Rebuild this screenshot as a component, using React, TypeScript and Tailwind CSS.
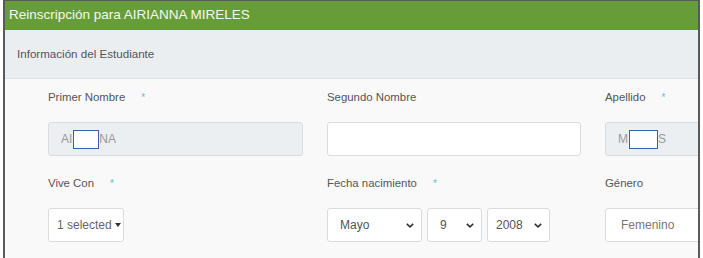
import React from "react";

const font = { fontFamily: '"Liberation Sans", Arial, sans-serif' };

function Label({ text, req }: { text: string; req?: boolean }) {
  return (
    <div className="h-[17px] flex items-center text-[11.4px] text-[#555]">
      <span>{text}</span>
      {req && <span className="ml-[16px] text-[#5bc0de] text-[10px] leading-none">*</span>}
    </div>
  );
}

function Chevron() {
  return (
    <svg width="10" height="7" viewBox="0 0 10 7" className="shrink-0">
      <path d="M1.8 1.8 L5 4.8 L8.2 1.8" fill="none" stroke="#333" strokeWidth="1.6" />
    </svg>
  );
}

function Redact({ className }: { className: string }) {
  return <span className={"inline-block h-[19px] bg-white border border-[#3a5fb0] " + className} />;
}

export default function App() {
  return (
    <div className="w-[703px] h-[258px] bg-white overflow-hidden" style={font}>
      <div className="ml-[3px] w-[697px] h-[258px] border-l-2 border-r-2 border-t border-[#5a5a5a] bg-[#f9f9f9] overflow-hidden flex flex-col">
        <div className="h-[29px] shrink-0 bg-[#679d38] flex items-center pl-[4px] text-[13.5px] text-[#f4f8ee]">
          Reinscripción para AIRIANNA MIRELES
        </div>
        <div className="h-[49px] shrink-0 bg-[#ebeef0] border-b border-[#dfe3e6] flex items-center pl-[12px] text-[11.6px] text-[#555]">
          Información del Estudiante
        </div>
        <div className="pl-[43px] pt-[10px] flex flex-col">
          <div className="flex gap-x-[24px] w-[700px]">
            <div className="w-[255px] shrink-0">
              <Label text="Primer Nombre" req />
              <div className="mt-[16px] h-[34px] rounded-[3px] border border-[#d8dcdf] bg-[#eceff1] flex items-center pl-[12px] text-[12px] text-[#9a9a9a]">
                <span>AI</span>
                <Redact className="w-[26px] ml-[1px]" />
                <span>NA</span>
              </div>
            </div>
            <div className="w-[254px] shrink-0">
              <Label text="Segundo Nombre" />
              <div className="mt-[16px] h-[34px] rounded-[3px] border border-[#d8dcdf] bg-white" />
            </div>
            <div className="w-[255px] shrink-0">
              <Label text="Apellido" req />
              <div className="mt-[16px] h-[34px] rounded-[3px] border border-[#d8dcdf] bg-[#eceff1] flex items-center pl-[12px] text-[12px] text-[#9a9a9a]">
                <span>M</span>
                <Redact className="w-[29px] ml-[1px]" />
                <span>S</span>
              </div>
            </div>
          </div>
          <div className="flex gap-x-[24px] w-[700px] mt-[19px]">
            <div className="w-[255px] shrink-0">
              <Label text="Vive Con" req />
              <div className="mt-[16px] w-[76px] h-[34px] rounded-[3px] border border-[#d8dcdf] bg-white flex items-center pl-[8px] text-[12px] text-[#666]">
                <span>1 selected</span>
                <span className="ml-[3px] w-0 h-0 border-l-[3.5px] border-r-[3.5px] border-t-[4px] border-l-transparent border-r-transparent border-t-[#333]" />
              </div>
            </div>
            <div className="w-[254px] shrink-0">
              <Label text="Fecha nacimiento" req />
              <div className="mt-[16px] flex gap-[5px]">
                <div className="w-[95px] h-[34px] rounded-[3px] border border-[#d8dcdf] bg-white flex items-center justify-between pl-[12px] pr-[6px] text-[12px] text-[#555]">
                  <span>Mayo</span>
                  <Chevron />
                </div>
                <div className="w-[55px] h-[34px] rounded-[3px] border border-[#d8dcdf] bg-white flex items-center justify-between pl-[12px] pr-[6px] text-[12px] text-[#555]">
                  <span>9</span>
                  <Chevron />
                </div>
                <div className="w-[63px] h-[34px] rounded-[3px] border border-[#d8dcdf] bg-white flex items-center justify-between pl-[8px] pr-[6px] text-[12px] text-[#555]">
                  <span>2008</span>
                  <Chevron />
                </div>
              </div>
            </div>
            <div className="w-[255px] shrink-0">
              <Label text="Género" />
              <div className="mt-[16px] h-[34px] rounded-[3px] border border-[#d8dcdf] bg-white flex items-center pl-[15px] text-[12px] text-[#777]">
                Femenino
              </div>
            </div>
          </div>
        </div>
      </div>
    </div>
  );
}
